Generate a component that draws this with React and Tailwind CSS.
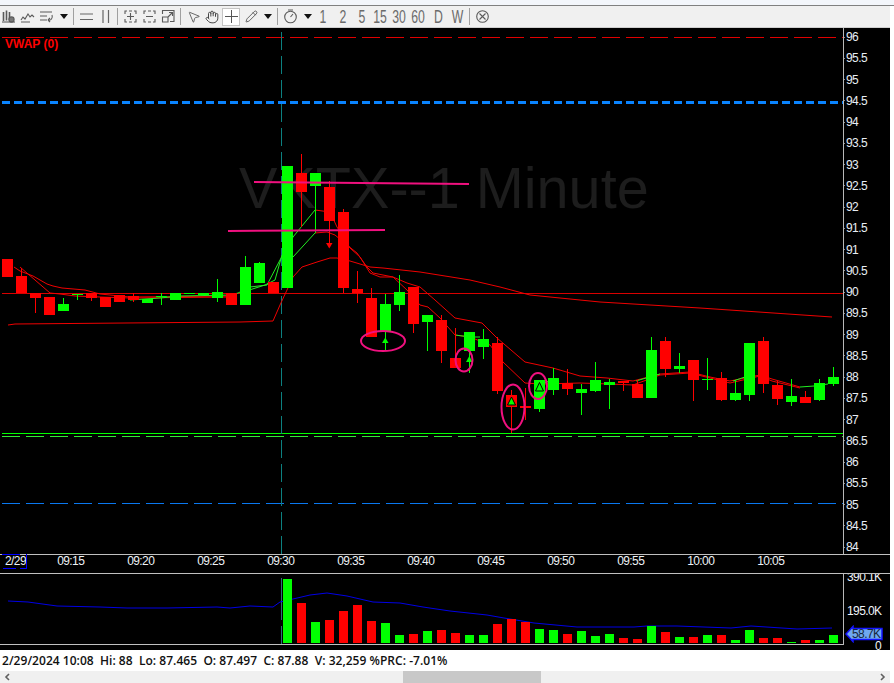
import React from "react";
import { Hand, Pencil, MousePointer2 } from "lucide-react";

const R = "#ff0000";
const G = "#00ff00";
// [index, colour, bodyTop, bodyBottom, wickTop, wickBottom]
const candles = [
  [0,R,259,277],[1,R,276,293,268,293],[2,R,293,298,293,313],[3,R,297,315],[4,G,304,311,298,311],
  [5,G,294,295,294,300],[6,R,293,298,293,301],[7,R,297,307],[8,R,295,302],[9,R,296,300,293,302],
  [10,G,299,303],[11,G,296,297,293,305],[12,G,293,300],[13,G,293,294],[14,G,293,295],
  [15,G,292,298,279,302],[16,R,293,305],[17,G,267,305,256,305],[18,G,263,283,262,283],[19,R,282,293],
  [20,G,166,288],[21,R,173,192,154,227],[22,G,173,186,173,233],[23,R,187,221,181,243],[24,R,212,288,209,293],
  [25,R,289,293,271,303],[26,R,298,337,288,337],[27,G,304,331,294,350],[28,G,292,305,275,311],[29,R,287,324,287,333],
  [30,G,315,322,315,351],[31,R,320,351,315,363],[32,R,358,368,328,368],[33,G,332,351,332,373],[34,G,339,347,329,359],
  [35,R,343,391,337,394],[36,R,395,407,390,433],[37,R,406,408,388,420],[38,G,380,409,380,412],[39,G,378,390,368,395],
  [40,R,383,389,369,395],[41,G,389,393,384,415],[42,G,380,391,362,392],[43,G,382,385,379,409],[44,R,381,383,381,391],
  [45,R,384,398,380,398],[46,G,350,398,337,398],[47,R,341,369,337,377],[48,G,366,369,353,373],[49,R,360,380,360,401],
  [50,G,379,380,358,390],[51,R,378,400,372,401],[52,G,393,400,380,401],[53,G,343,395,343,401],[54,R,341,384,337,393],
  [55,R,385,399,381,405],[56,G,396,402,379,406],[57,R,397,403,391,403],[58,G,383,400,379,401],[59,G,377,384,367,386],
];
const volumes = [
  [20,G,579],[21,R,603],[22,G,622],[23,R,620],[24,R,611],[25,R,605],[26,R,621],[27,G,623],[28,G,635],[29,R,634],
  [30,G,631],[31,R,630],[32,R,633],[33,G,635],[34,G,635],[35,R,624],[36,R,619],[37,R,622],[38,G,629],[39,G,630],
  [40,R,634],[41,G,631],[42,G,636],[43,G,634],[44,R,638],[45,R,639],[46,G,626],[47,R,632],[48,G,637],[49,R,637],
  [50,G,635],[51,R,635],[52,G,640],[53,G,630],[54,R,638],[55,R,638],[56,G,642],[57,R,640],[58,G,640],[59,G,635],
];
const redLines = [
  "14,267 20,271 33,276 47,284 53,286 62,288 85,290 100,294 130,297 230,296",
  "20,267 35,280 50,293 60,294 75,296 100,297 130,298 230,297",
  "8,325 15,324 125,323 240,322 273,321 280,305 287,290 293,277 302,267 317,262 330,258 337,258 350,261 370,267 383,268 420,272 470,280 500,287 530,295 600,302 700,308 832,317",
  "315,210 330,212 337,227 350,248 360,257 370,273 380,277 393,277 407,283 420,287 435,300 455,318 482,323 497,338 525,362 553,368 580,376 607,378 633,381 660,374 690,372 710,377 730,381 760,375 772,379 800,387",
  "315,233 327,232 335,235 347,245 357,253 367,267 373,273 393,277 407,290 420,305 428,307 440,318 455,335 470,337 490,345 503,362 525,383 540,384 580,383 610,384 633,385 660,375 690,373 710,378 730,383 760,376 772,381 800,388",
];
const greenLines = [
  "130,300 160,298 180,296 230,295 238,293 250,287 267,285 280,260 293,237 315,210",
  "240,293 265,285 275,280 282,255 293,257 315,233",
  "455,335 470,337 480,337",
  "540,384 553,380",
  "636,381 646,378 660,374",
  "733,381 745,377 755,375",
  "800,387 814,386 828,384",
];
const volLine = "8,601 28,602 57,606 100,607 127,608 167,608 217,607 230,608 250,606 273,607 280,602 293,599 310,595 327,593 347,596 373,602 400,603 423,607 450,611 487,615 504,618 534,623 577,627 634,627 647,626 677,626 731,628 751,626 797,629 832,628";
const prices = ["96","95.5","95","94.5","94","93.5","93","92.5","92","91.5","91","90.5","90","89.5","89","88.5","88","87.5","87","86.5","86","85.5","85","84.5","84"];
const times = ["09:15","09:20","09:25","09:30","09:35","09:40","09:45","09:50","09:55","10:00","10:05"];

function Caret() {
  return <svg width="8" height="5" viewBox="0 0 8 5"><path d="M0 0h8L4 5z" fill="#111" /></svg>;
}
function Sep() {
  return <div className="w-px h-[17px] bg-[#a0a0a0]" />;
}
function Ico({ children }) {
  return (
    <svg width="15" height="15" viewBox="0 0 15 15" fill="none" stroke="#5a5a5a" strokeWidth="1.1">
      {children}
    </svg>
  );
}
function Num({ children }) {
  return (
    <span className="text-[18px] leading-none font-light text-[#6a6a6a] scale-x-[0.68] [font-family:'Liberation_Sans',sans-serif]">
      {children}
    </span>
  );
}

const cell = "flex items-center justify-center shrink-0 h-full";

function Toolbar() {
  return (
    <div className="flex items-center w-[890px] h-[22px] bg-[#f0f0f0] border-b border-[#cfcfcf]">
      <div className={cell + " w-[17px]"}>
        <Ico><path d="M2.5 3v9M5.5 1.5v10M8.5 3v8" strokeWidth="1.6" /><circle cx="10.5" cy="10.5" r="2.6" fill="#777" /><path d="M1 13h13" /></Ico>
      </div>
      <div className={cell + " w-[21px]"}>
        <Ico><path d="M1 11l2-3 2 2 3-5 2 3 2-2 2 2M1 13h9" /></Ico>
      </div>
      <div className={cell + " w-[17px]"}>
        <Ico><path d="M1 3h12M1 7h7M1 11h7M13 6c1 3-1 6-4 5M9 11l2-2M9 11l2 2" /></Ico>
      </div>
      <div className={cell + " w-[17px]"}><Caret /></div>
      <div className={cell + " w-[2px]"}><Sep /></div>
      <div className={cell + " w-[24px]"}>
        <svg width="13" height="8" viewBox="0 0 13 8"><path d="M0 1h13M0 6.5h13" stroke="#666" strokeWidth="1.2" /></svg>
      </div>
      <div className={cell + " w-[15px]"}>
        <svg width="8" height="13" viewBox="0 0 8 13"><path d="M1 0v13M6.5 0v13" stroke="#666" strokeWidth="1.2" /></svg>
      </div>
      <div className={cell + " w-[8px]"}><Sep /></div>
      <div className={cell + " w-[18px]"}>
        <Ico><path d="M4 2H2v3M11 2h2v3M4 13H2v-3M11 13h2v-3M4 7.5h7M7.5 4v7M6 2h3M6 13h3" /></Ico>
      </div>
      <div className={cell + " w-[20px]"}>
        <Ico><path d="M4 2H2v3M11 2h2v3M4 13H2v-3M11 13h2v-3M4 7.5h7M6 2h3M6 13h3" /></Ico>
      </div>
      <div className={cell + " w-[18px]"}>
        <Ico><path d="M1.5 5V1.5H13v11H9M1.5 8h5.5v5H1.5zM7 8l4.5-4.5M8 3.5h3.5V7" /></Ico>
      </div>
      <div className={cell + " w-[6px]"}><Sep /></div>
      <div className={cell + " w-[21px]"}><MousePointer2 size={14} color="#555" strokeWidth={1.5} /></div>
      <div className={cell + " w-[16px]"}><Hand size={14} color="#444" strokeWidth={1.7} /></div>
      <div className={cell + " w-[22px]"}>
        <div className="flex items-center justify-center w-[18px] h-[18px] bg-white border border-[#c4c4c4]">
          <svg width="13" height="13" viewBox="0 0 13 13"><path d="M6.5 0v13M0 6.5h13" stroke="#555" strokeWidth="1" /></svg>
        </div>
      </div>
      <div className={cell + " w-[18px]"}><Pencil size={13} color="#444" strokeWidth={1.5} /></div>
      <div className={cell + " w-[15px]"}><Caret /></div>
      <div className={cell + " w-[4px]"}><Sep /></div>
      <div className={cell + " w-[22px]"}>
        <Ico><circle cx="7.5" cy="8" r="5.8" /><path d="M5 1h5M7.5 8l2.5-3" /></Ico>
      </div>
      <div className={cell + " w-[13px]"}><Caret /></div>
      <div className={cell + " w-[19px]"}><Num>1</Num></div>
      <div className={cell + " w-[20px]"}><Num>2</Num></div>
      <div className={cell + " w-[18px]"}><Num>5</Num></div>
      <div className={cell + " w-[19px]"}><Num>15</Num></div>
      <div className={cell + " w-[19px]"}><Num>30</Num></div>
      <div className={cell + " w-[19px]"}><Num>60</Num></div>
      <div className={cell + " w-[20px]"}><Num>D</Num></div>
      <div className={cell + " w-[18px]"}><Num>W</Num></div>
      <div className={cell + " w-[6px]"}><Sep /></div>
      <div className={cell + " w-[20px]"}>
        <Ico><circle cx="7.5" cy="7.5" r="5.8" /><path d="M4.5 4.5l6 6M10.5 4.5l-6 6" /></Ico>
      </div>
    </div>
  );
}

function MainChart() {
  return (
    <svg className="block w-[843px] h-[526px] shrink-0" viewBox="0 28 843 526">
      <text x="239" y="208" fontSize="57.6" fontFamily="'Liberation Sans', sans-serif" fill="#1d1d1d">VKTX--1 Minute</text>
      <g shapeRendering="crispEdges">
        <line x1="2" x2="843" y1="37.5" y2="37.5" stroke="#e00000" strokeDasharray="18 6" />
        <line x1="2" x2="843" y1="102.5" y2="102.5" stroke="#0a84ff" strokeWidth="3" strokeDasharray="8 4" />
        <line x1="2" x2="843" y1="293.5" y2="293.5" stroke="#d80000" />
        <line x1="2" x2="843" y1="433.5" y2="433.5" stroke="#00ff00" />
        <line x1="2" x2="843" y1="436.5" y2="436.5" stroke="#33ee33" strokeDasharray="18 6" />
        <line x1="2" x2="843" y1="503.5" y2="503.5" stroke="#0a78f0" strokeDasharray="18 6" />
        <line x1="281.5" x2="281.5" y1="32" y2="554" stroke="#0c8080" strokeDasharray="18 6" />
      </g>
      {redLines.map((p, i) => <polyline key={i} points={p} fill="none" stroke="#f00000" strokeWidth="1" />)}
      {greenLines.map((p, i) => <polyline key={i} points={p} fill="none" stroke="#22ee22" strokeWidth="1" />)}
      <g shapeRendering="crispEdges">
        {candles.map(([i, c, t, b, wt, wb]) => (
          <g key={i} fill={c}>
            {wt !== undefined && <rect x={2 + 14 * i + 5} y={wt} width="1" height={wb - wt} />}
            <rect x={2 + 14 * i} y={t} width="11" height={b - t} />
          </g>
        ))}
      </g>
      <path d="M326 243h6.5l-3.2 5.5z" fill="#ff0000" />
      <path d="M382 343h6.5l-3.2-5.5z" fill="#00ff00" />
      <path d="M466 362h6.5l-3.2-6z" fill="#00ff00" />
      <path d="M507.5 405h8l-4-8z" fill="#00ff00" stroke="#000" />
      <path d="M535.5 391h8l-4-8.5z" fill="#00ff00" stroke="#000" />
      <g fill="none" stroke="#f0107f" strokeWidth="2">
        <line x1="254" y1="182" x2="469" y2="184" />
        <line x1="228" y1="231" x2="385" y2="230" />
        <ellipse cx="383" cy="341" rx="22" ry="10" />
        <ellipse cx="464" cy="360" rx="8.5" ry="11.5" />
        <ellipse cx="513" cy="407" rx="11.5" ry="22.5" />
        <ellipse cx="538" cy="386" rx="9" ry="13" />
      </g>
    </svg>
  );
}

function VolumeChart() {
  return (
    <svg className="block w-[843px] h-[70px]" viewBox="0 574 843 70">
      <line x1="281.5" x2="281.5" y1="578" y2="620" stroke="#2f6f78" shapeRendering="crispEdges" />
      <line x1="281.5" x2="281.5" y1="626" y2="644" stroke="#2f6f78" shapeRendering="crispEdges" />
      <polyline points={volLine} fill="none" stroke="#0000e6" strokeWidth="1" />
      <g shapeRendering="crispEdges">
        {volumes.map(([i, c, t]) => <rect key={i} x={3 + 14 * i} y={t} width="9" height={643 - t} fill={c} />)}
      </g>
    </svg>
  );
}

export default function App() {
  return (
    <div className="w-[894px] h-[683px] bg-white overflow-hidden flex flex-col [font-family:'Liberation_Sans',Arial,sans-serif]">
      <div className="h-[5px] shrink-0 bg-[#f3f6fb]" />
      <div className="h-px shrink-0 bg-[#808080]" />
      <Toolbar />
      <div className="w-[890px] h-[622px] shrink-0 bg-black flex flex-col relative">
        <span className="absolute left-[5px] top-[9px] text-[12px] leading-[14px] font-bold text-[#ff0000]">VWAP (0)</span>
        <div className="flex h-[526px] shrink-0">
          <MainChart />
          <div className="flex-1 border-l border-[#b8b8b8] overflow-hidden">
            <div className="flex flex-col mt-[-1.6px]">
              {prices.map((p) => (
                <div key={p} className="h-[21.25px] shrink-0 flex items-center text-[#e8eef5] text-[12px] tracking-[-0.6px] leading-none">
                  <span className="w-[1px] h-px bg-[#8a8a8a] mr-[1px]" />
                  {p}
                </div>
              ))}
            </div>
          </div>
        </div>
        <div className="h-[19px] shrink-0 border-t border-[#c0c0c0] flex items-start text-[#eef2f6] text-[12px] tracking-[-0.6px] leading-none relative">
          <div className="w-[35.7px] shrink-0 relative h-full pl-[5px]">
            <span>2/29</span>
            <span className="absolute left-[2px] top-[-1px] w-[18px] h-px bg-[#0000ff]" />
            <span className="absolute left-[26px] top-[-1px] w-px h-[15px] bg-[#0000ff]" />
            <span className="absolute left-[3px] top-[13px] w-[13px] h-px bg-[#0000ff]" />
            <span className="absolute left-[20px] top-[13px] w-[7px] h-px bg-[#0000ff]" />
          </div>
          {times.map((t) => (
            <div key={t} className="w-[70px] shrink-0 text-center">{t}</div>
          ))}
        </div>
        <div className="h-[77px] shrink-0 border-t border-[#c0c0c0] flex items-start">
          <div className="w-[843px] shrink-0 h-[71px] border-b border-[#c0c0c0]">
            <VolumeChart />
          </div>
          <div className="flex-1 relative border-l-0 h-[76px] overflow-hidden text-[#f0f4f8] text-[12px] tracking-[-0.6px] leading-none">
            <span className="absolute left-0 top-0 w-px h-[71px] bg-[#b8b8b8]" />
            <div className="mt-[-3px] ml-[4px]">390.1K</div>
            <div className="mt-[22px] ml-[4px]">195.0K</div>
            <span className="absolute left-[32px] top-[66px]">0</span>
            <svg className="absolute left-[2px] top-[51px]" width="38" height="18" viewBox="0 0 38 18">
              <path d="M1 9L8 1.5V3.5H37V14.5H8V16.5z" fill="#6fa8f0" stroke="#1414ff" strokeWidth="1.5" />
            </svg>
            <span className="absolute left-[9px] top-[54px] text-[#16263c]">58.7K</span>
          </div>
        </div>
      </div>
      <div className="w-[890px] h-[21px] shrink-0 bg-white flex items-center pl-[2px] text-[12px] tracking-[0.03px] leading-none font-semibold text-[#111] whitespace-pre [font-family:'Open_Sans',sans-serif]">
        2/29/2024 10:08  Hi: 88  Lo: 87.465  O: 87.497  C: 87.88  V: 32,259 %PRC: -7.01%
      </div>
      <div className="w-[890px] h-[12px] shrink-0 bg-[#f0f0f0] flex items-center">
        <div className="w-[403px] pl-[4px]">
          <svg width="6" height="8" viewBox="0 0 6 8"><path d="M5 1L2 4l3 3" fill="none" stroke="#606060" strokeWidth="1.6" /></svg>
        </div>
        <div className="w-[138px] h-full bg-[#c8c8c8]" />
        <div className="flex-1 flex justify-end pr-[4px]">
          <svg width="6" height="8" viewBox="0 0 6 8"><path d="M1 1l3 3-3 3" fill="none" stroke="#606060" strokeWidth="1.6" /></svg>
        </div>
      </div>
    </div>
  );
}
